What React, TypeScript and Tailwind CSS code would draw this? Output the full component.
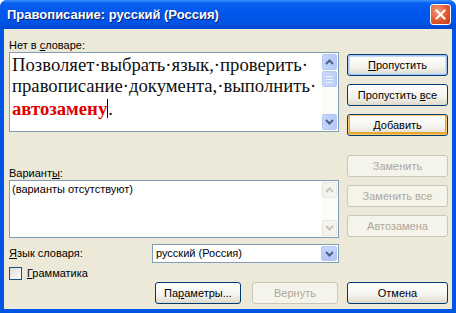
import React from "react";

const ui = { fontFamily: '"Liberation Sans", Arial, sans-serif' };

function XpButton({
  children,
  disabled,
  variant,
  className = "",
}: {
  children: React.ReactNode;
  disabled?: boolean;
  variant?: "default" | "hover";
  className?: string;
}) {
  if (disabled) {
    return (
      <div
        className={`flex h-[22px] items-center justify-center rounded-[3px] border border-[#c9c7ba] bg-[#f5f4ea] text-[11px] text-[#aca899] ${className}`}
      >
        <span>{children}</span>
      </div>
    );
  }
  const ring =
    variant === "default"
      ? "shadow-[inset_0_0_0_1px_#a8c6f4,inset_0_0_0_2px_#c6daf8]"
      : variant === "hover"
        ? "shadow-[inset_0_0_0_1px_#f8c869,inset_0_-1px_0_2px_#e6a830]"
        : "";
  return (
    <div
      className={`flex h-[22px] items-center justify-center rounded-[3px] border border-[#003c74] bg-[linear-gradient(to_bottom,#ffffff_0%,#f4f3ee_60%,#dcd8ca_100%)] text-[11px] text-black ${ring} ${className}`}
    >
      <span>{children}</span>
    </div>
  );
}

function Arrow({ up, color }: { up?: boolean; color: string }) {
  return (
    <svg width="9" height="6" viewBox="0 0 9 6">
      <path
        d={up ? "M1 5 L4.5 1.5 L8 5" : "M1 1 L4.5 4.5 L8 1"}
        fill="none"
        stroke={color}
        strokeWidth="2"
      />
    </svg>
  );
}

function ScrollBar({ disabled }: { disabled?: boolean }) {
  const btn = disabled
    ? "border-[#e8e7e1] bg-[#f4f3ee]"
    : "border-[#b5c8f4] bg-[linear-gradient(to_right,#c5d6fc,#b4caf7)]";
  const arrowColor = disabled ? "#c9c7ba" : "#4d6185";
  return (
    <div className="flex w-[17px] flex-col bg-[#fbfbf8] p-px">
      <div className={`flex h-[16px] items-center justify-center rounded-[2px] border ${btn}`}>
        <Arrow up color={arrowColor} />
      </div>
      {!disabled && (
        <div className="mt-px flex h-[16px] flex-col items-center justify-center gap-[2px] rounded-[2px] border border-[#b5c8f4] bg-[linear-gradient(to_right,#c9d8fc,#bccff8)]">
          <div className="h-px w-[7px] bg-[#eef4fe]" />
          <div className="h-px w-[7px] bg-[#eef4fe]" />
          <div className="h-px w-[7px] bg-[#eef4fe]" />
        </div>
      )}
      <div className="flex-1" />
      <div className={`flex h-[16px] items-center justify-center rounded-[2px] border ${btn}`}>
        <Arrow color={arrowColor} />
      </div>
    </div>
  );
}

export default function App() {
  return (
    <div className="h-[313px] w-[456px] overflow-hidden bg-white" style={ui}>
      <div className="flex h-full flex-col overflow-hidden rounded-t-[7px] bg-[#0054e3]">
        {/* title bar */}
        <div className="flex h-[29px] shrink-0 items-center justify-between bg-[linear-gradient(to_bottom,#3d95ff_0%,#0a61f0_10%,#0058ee_35%,#0055e8_75%,#0048d2_100%)] pl-[7px] pr-[5px]">
          <span className="text-[13px] font-bold text-white [text-shadow:1px_1px_0_#0a1e6e]">
            Правописание: русский (Россия)
          </span>
          <div className="flex h-[21px] w-[21px] items-center justify-center rounded-[3px] border border-white bg-[radial-gradient(circle_at_35%_30%,#f59a7e,#e0572e_55%,#c2381a)]">
            <svg width="11" height="11" viewBox="0 0 11 11">
              <path d="M1.5 1.5 L9.5 9.5 M9.5 1.5 L1.5 9.5" stroke="white" strokeWidth="2.2" strokeLinecap="round" />
            </svg>
          </div>
        </div>

        {/* body */}
        <div className="mx-[4px] mb-[4px] flex flex-1 bg-[#ece9d8] text-[11px] text-black">
          <div className="ml-[5px] flex w-[330px] flex-col">
            <div className="mt-[9px] h-[14px] leading-[14px]">
              Нет в <span className="underline">с</span>ловаре:
            </div>
            <div className="flex h-[80px] border border-[#7f9db9] bg-white">
              <div
                className="flex-1 pl-[2px] pt-[1px] text-[18.7px] leading-[21px] text-[#111]"
                style={{ fontFamily: '"Liberation Serif", "Times New Roman", serif' }}
              >
                Позволяет·выбрать·язык,·проверить·
                <br />
                правописание·документа,·выполнить·
                <br />
                <span className="font-bold text-[#e00000]">автозамену</span>
                <span className="inline-block h-[19px] w-px translate-y-[3px] bg-black" />
                .
              </div>
              <ScrollBar />
            </div>
            <div className="mt-[34px] h-[14px] leading-[14px]">
              Вариант<span className="underline">ы</span>:
            </div>
            <div className="flex h-[58px] border border-[#7f9db9] bg-white">
              <div className="flex-1 pl-[2px] pt-[2px] leading-[13px]">(варианты отсутствуют)</div>
              <ScrollBar disabled />
            </div>
            <div className="mt-[6px] flex h-[19px] items-center">
              <div className="w-[143px]">
                <span className="underline">Я</span>зык словаря:
              </div>
              <div className="flex h-[19px] flex-1 items-center border border-[#7f9db9] bg-white">
                <span className="flex-1 pl-[3px]">русский (Россия)</span>
                <div className="m-px flex h-[15px] w-[16px] items-center justify-center rounded-[2px] border border-[#b5c8f4] bg-[linear-gradient(to_bottom,#c5d6fc,#b0c6f6)]">
                  <Arrow color="#4d6185" />
                </div>
              </div>
            </div>
            <div className="mt-[4px] flex h-[13px] items-center gap-[5px]">
              <div className="h-[13px] w-[13px] border border-[#1c5180] bg-[linear-gradient(135deg,#dcdcd7,#ffffff)]" />
              <span>
                <span className="underline">Г</span>рамматика
              </span>
            </div>
            <div className="mt-[2px] flex gap-[11px] pl-[146px]">
              <XpButton className="w-[86px]">
                Па<span className="underline">р</span>аметры...
              </XpButton>
              <XpButton disabled className="w-[86px]">
                Вернуть
              </XpButton>
            </div>
          </div>

          <div className="ml-[8px] flex w-[101px] flex-col">
            <div className="mt-[25px] flex flex-col gap-[8px]">
              <XpButton variant="default">
                <span className="underline">П</span>ропустить
              </XpButton>
              <XpButton>
                Пропустить <span className="underline">в</span>се
              </XpButton>
              <XpButton variant="hover">
                <span className="underline">Д</span>обавить
              </XpButton>
            </div>
            <div className="mt-[19px] flex flex-col gap-[8px]">
              <XpButton disabled>Заменить</XpButton>
              <XpButton disabled>Заменить все</XpButton>
              <XpButton disabled>Автозамена</XpButton>
            </div>
            <div className="mt-[45px]">
              <XpButton>Отмена</XpButton>
            </div>
          </div>
        </div>
      </div>
    </div>
  );
}
